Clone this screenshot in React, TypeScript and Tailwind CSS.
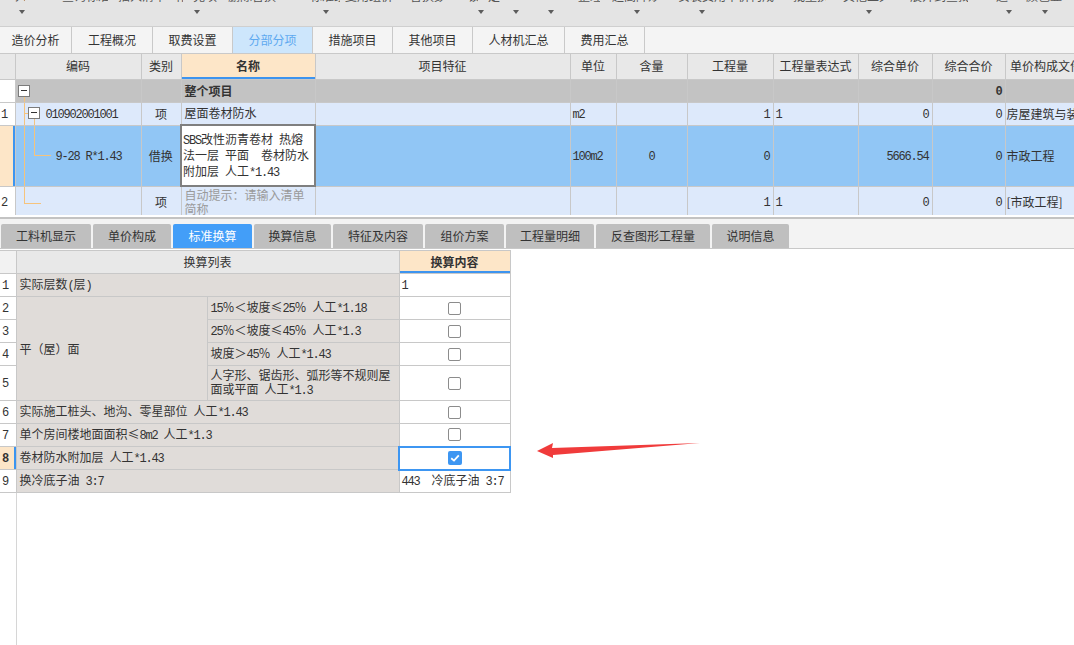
import React from "react";

const MONO = "font-['Liberation_Mono',monospace] text-[12px] tracking-[-1.2px]";

// splits a label into CJK runs and narrow ascii runs (the app draws ascii in a bitmap mono font)
function T({ s }: { s: string }) {
  const parts = s.split(/([\x20-\x7e]+)/);
  return (
    <>
      {parts.map((p, i) =>
        p === "" ? null : /^[\x20-\x7e]+$/.test(p) ? (
          <span key={i} className={MONO}>
            {p}
          </span>
        ) : (
          <React.Fragment key={i}>{p}</React.Fragment>
        )
      )}
    </>
  );
}

const toolFragments = [
  { c: "ml-[15px] w-[10px]", t: "入" },
  { c: "ml-[37px] w-[46px]", t: "查询标准" },
  { c: "ml-[10px] w-[47px]", t: "插入清单" },
  { c: "ml-[10px] w-[8px]", t: "补" },
  { c: "ml-[10px] w-[27px]", t: "充项" },
  { c: "ml-[8px] w-[59px]", t: "删除替换" },
  { c: "ml-[23px] w-[30px]", t: "标准组" },
  { c: "ml-[5px] w-[50px]", t: "复用组价" },
  { c: "ml-[15px] w-[33px]", t: "替换数" },
  { c: "ml-[25px] w-[10px]", t: "锁" },
  { c: "ml-[10px] w-[15px]", t: "定" },
  { c: "ml-[75px] w-[22px]", t: "整理" },
  { c: "ml-[12px] w-[45px]", t: "超高降效" },
  { c: "ml-[21px] w-[102px]", t: "安装费用单价构成" },
  { c: "ml-[13px] w-[33px]", t: "批量换" },
  { c: "ml-[17px] w-[43px]", t: "其他工具" },
  { c: "ml-[24px] w-[58px]", t: "展开到查找" },
  { c: "ml-[28px] w-[14px]", t: "过" },
  { c: "ml-[16px] w-[37px]", t: "颜色显" },
];

const carets = [
  "ml-[19px]",
  "ml-[169px]",
  "ml-[123px]",
  "ml-[149px]",
  "ml-[29px]",
  "ml-[29px]",
  "ml-[80px]",
  "ml-[59px]",
  "ml-[161px]",
  "ml-[134px]",
  "ml-[30px]",
];

const topTabs = [
  { t: "造价分析", c: "w-[72px]" },
  { t: "工程概况", c: "w-[81px]" },
  { t: "取费设置", c: "w-[80px]" },
  { t: "分部分项", c: "w-[80px]", a: true },
  { t: "措施项目", c: "w-[80px]" },
  { t: "其他项目", c: "w-[80px]" },
  { t: "人材机汇总", c: "w-[92px]" },
  { t: "费用汇总", c: "w-[80px]" },
];

const bottomTabs = [
  { t: "工料机显示", c: "w-[90px]" },
  { t: "单价构成", c: "w-[78px]" },
  { t: "标准换算", c: "w-[79px]", a: true },
  { t: "换算信息", c: "w-[77px]" },
  { t: "特征及内容", c: "w-[90px]" },
  { t: "组价方案", c: "w-[79px]" },
  { t: "工程量明细", c: "w-[88px]" },
  { t: "反查图形工程量", c: "w-[114px]" },
  { t: "说明信息", c: "w-[77px]" },
];

const bd = "border border-[#c8c8c8] p-0";
const LINE = "absolute bg-[#f6c37c]";

function MinusBox({ className }: { className: string }) {
  return (
    <span className={`absolute w-[12px] h-[12px] border border-[#7b7b7b] bg-white flex items-center justify-center ${className}`}>
      <span className="w-[6px] h-[1px] bg-[#333]" />
    </span>
  );
}

function Check({ on }: { on?: boolean }) {
  return on ? (
    <span className="inline-flex w-[14px] h-[14px] rounded-[2px] bg-[#3d96f2] items-center justify-center">
      <svg width="10" height="8" viewBox="0 0 10 8">
        <path d="M1.2 4.2 L4 6.6 L8.8 1.4" stroke="white" strokeWidth="1.8" fill="none" />
      </svg>
    </span>
  ) : (
    <span className="inline-block w-[13px] h-[13px] rounded-[2px] border border-[#8c8c8c] bg-white" />
  );
}

const rowNo = `${bd} border-l-0 bg-white text-left pl-[1px]`;
const num = "text-right pr-[3px]";

export default function App() {
  return (
    <div className="relative w-[1074px] h-[645px] overflow-hidden bg-white text-[12px] leading-[16px] text-[#333] font-['Microsoft_YaHei','Noto_Sans_CJK_SC',sans-serif]">
      {/* toolbar, scrolled so only its lower edge shows */}
      <div className="h-[27px] bg-[#e4e4e4] border-b border-[#cfcfcf]">
        <div className="h-[3px] overflow-hidden">
          <div className="flex -mt-[12px] text-[#555] whitespace-nowrap">
            {toolFragments.map((f, i) => (
              <span key={i} className={`inline-block overflow-hidden ${f.c}`}>
                {f.t}
              </span>
            ))}
          </div>
        </div>
        <div className="flex mt-[7px]">
          {carets.map((c, i) => (
            <span
              key={i}
              className={`w-0 h-0 border-l-[3px] border-r-[3px] border-t-[4px] border-l-transparent border-r-transparent border-t-[#5c5c5c] ${c}`}
            />
          ))}
        </div>
      </div>

      {/* page tabs */}
      <div className="flex h-[27px] bg-[#f4f4f4] border-b border-[#c9c9c9]">
        {topTabs.map((t) => (
          <div
            key={t.t}
            className={`${t.c} border-r border-[#c9c9c9] flex items-center justify-center ${
              t.a ? "bg-[#cde6fc] text-[#5ea9f0]" : ""
            }`}
          >
            {t.t}
          </div>
        ))}
      </div>

      {/* bill grid */}
      <div className="h-[161px] overflow-hidden">
        <table className="table-fixed border-collapse w-[1087px]">
          <colgroup>
            <col className="w-[15px]" />
            <col className="w-[126px]" />
            <col className="w-[40px]" />
            <col className="w-[134px]" />
            <col className="w-[255px]" />
            <col className="w-[46px]" />
            <col className="w-[71px]" />
            <col className="w-[86px]" />
            <col className="w-[85px]" />
            <col className="w-[74px]" />
            <col className="w-[73px]" />
            <col className="w-[82px]" />
          </colgroup>
          <thead>
            <tr className="h-[25px] bg-[#e8e8e8]">
              <th className={`${bd} border-t-0 border-l-0`} />
              <th className={`${bd} border-t-0 font-normal`}>编码</th>
              <th className={`${bd} border-t-0 font-normal`}>类别</th>
              <th className={`${bd} border-t-0 font-bold bg-[#fde6c8] shadow-[inset_0_-2px_0_#3d94ef]`}>名称</th>
              <th className={`${bd} border-t-0 font-normal`}>项目特征</th>
              <th className={`${bd} border-t-0 font-normal`}>单位</th>
              <th className={`${bd} border-t-0 font-normal`}>含量</th>
              <th className={`${bd} border-t-0 font-normal`}>工程量</th>
              <th className={`${bd} border-t-0 font-normal`}>工程量表达式</th>
              <th className={`${bd} border-t-0 font-normal`}>综合单价</th>
              <th className={`${bd} border-t-0 font-normal`}>综合合价</th>
              <th className={`${bd} border-t-0 font-normal whitespace-nowrap overflow-hidden`}>单价构成文件</th>
            </tr>
          </thead>
          <tbody>
            <tr className="h-[23px] bg-[#c3c3c3]">
              <td className={rowNo} />
              <td className={`${bd} relative`}>
                <MinusBox className="left-[2px] top-[5px]" />
                <span className={`${LINE} left-[8px] top-[17px] bottom-0 w-[1px]`} />
              </td>
              <td className={bd} />
              <td className={`${bd} pl-[3px] font-bold`}>整个项目</td>
              <td className={bd} />
              <td className={bd} />
              <td className={bd} />
              <td className={bd} />
              <td className={bd} />
              <td className={bd} />
              <td className={`${bd} ${num} font-bold`}>
                <span className={`${MONO} font-bold`}>0</span>
              </td>
              <td className={bd} />
            </tr>
            <tr className="h-[23px] bg-[#dde9fb]">
              <td className={rowNo}>
                <T s="1" />
              </td>
              <td className={`${bd} relative`}>
                <span className={`${LINE} left-[8px] top-0 bottom-0 w-[1px]`} />
                <span className={`${LINE} left-[8px] top-[10px] h-[1px] w-[4px]`} />
                <MinusBox className="left-[12px] top-[4px]" />
                <span className={`${LINE} left-[18px] top-[16px] bottom-0 w-[1px]`} />
                <span className="pl-[30px]">
                  <T s="010902001001" />
                </span>
              </td>
              <td className={`${bd} text-center`}>项</td>
              <td className={`${bd} pl-[3px]`}>屋面卷材防水</td>
              <td className={bd} />
              <td className={`${bd} pl-[2px]`}>
                <T s="m2" />
              </td>
              <td className={bd} />
              <td className={`${bd} ${num}`}>
                <T s="1" />
              </td>
              <td className={`${bd} pl-[2px]`}>
                <T s="1" />
              </td>
              <td className={`${bd} ${num}`}>
                <T s="0" />
              </td>
              <td className={`${bd} ${num}`}>
                <T s="0" />
              </td>
              <td className={`${bd} pl-[1px] whitespace-nowrap overflow-hidden`}>房屋建筑与装饰工程</td>
            </tr>
            <tr className="h-[61px] bg-[#91c6f5]">
              <td className={`${bd} border-l-0 bg-[#fde6c8] shadow-[inset_-2px_0_0_#3c95f0]`} />
              <td className={`${bd} relative`}>
                <span className={`${LINE} left-[8px] top-0 bottom-0 w-[1px]`} />
                <span className={`${LINE} left-[18px] top-0 h-[29px] w-[1px]`} />
                <span className={`${LINE} left-[18px] top-[29px] h-[1px] w-[17px]`} />
                <span className="pl-[40px]">
                  <T s="9-28 R*1.43" />
                </span>
              </td>
              <td className={`${bd} text-center`}>借换</td>
              <td className="border-2 border-[#7f7f7f] bg-white p-0 pl-[1px] leading-[14px]">
                <T s="SBS改性沥青卷材 热熔" />
                <br />
                <T s="法一层 平面　卷材防水" />
                <br />
                <T s="附加层 人工*1.43" />
              </td>
              <td className={bd} />
              <td className={`${bd} pl-[2px]`}>
                <T s="100m2" />
              </td>
              <td className={`${bd} text-center`}>
                <T s="0" />
              </td>
              <td className={`${bd} ${num}`}>
                <T s="0" />
              </td>
              <td className={bd} />
              <td className={`${bd} ${num}`}>
                <T s="5666.54" />
              </td>
              <td className={`${bd} ${num}`}>
                <T s="0" />
              </td>
              <td className={`${bd} pl-[1px]`}>市政工程</td>
            </tr>
            <tr className="h-[32px] bg-[#dde9fb]">
              <td className={rowNo}>
                <T s="2" />
              </td>
              <td className={`${bd} relative`}>
                <span className={`${LINE} left-[8px] top-0 h-[16px] w-[1px]`} />
                <span className={`${LINE} left-[8px] top-[16px] h-[1px] w-[17px]`} />
              </td>
              <td className={`${bd} text-center`}>项</td>
              <td className={`${bd} px-[3px] text-[#9a9a9a] leading-[14px]`}>自动提示：请输入清单简称</td>
              <td className={bd} />
              <td className={bd} />
              <td className={bd} />
              <td className={`${bd} ${num}`}>
                <T s="1" />
              </td>
              <td className={`${bd} pl-[2px]`}>
                <T s="1" />
              </td>
              <td className={`${bd} ${num}`}>
                <T s="0" />
              </td>
              <td className={`${bd} ${num}`}>
                <T s="0" />
              </td>
              <td className={`${bd} pl-[1px]`}>[市政工程]</td>
            </tr>
          </tbody>
        </table>
      </div>

      <div className="h-[2px]" />
      <div className="h-[2px] bg-[#c3c3c3]" />

      {/* detail tabs */}
      <div className="h-[30px] bg-[#f3f3f3] border-b border-[#c8c8c8] flex items-end gap-[2px] pl-[1px]">
        {bottomTabs.map((t) => (
          <div
            key={t.t}
            className={`${t.c} h-[24px] rounded-t-[2px] flex items-center justify-center ${
              t.a ? "bg-[#439ef8] text-white" : "bg-[#bfbfbf] text-[#333]"
            }`}
          >
            {t.t}
          </div>
        ))}
      </div>

      {/* standard conversion grid */}
      <table className="mt-[1px] table-fixed border-collapse w-[510px]">
        <colgroup>
          <col className="w-[16px]" />
          <col className="w-[191px]" />
          <col className="w-[192px]" />
          <col className="w-[111px]" />
        </colgroup>
        <thead>
          <tr className="h-[23px]">
            <th className={`${bd} border-l-0 bg-[#f2f2f2]`} />
            <th colSpan={2} className={`${bd} bg-[#e8e8e8] font-normal`}>
              换算列表
            </th>
            <th className={`${bd} bg-[#fde6c8] font-bold shadow-[inset_0_-2px_0_#3d94ef]`}>换算内容</th>
          </tr>
        </thead>
        <tbody className="bg-[#e0dcd9]">
          <tr className="h-[23px]">
            <td className={`${rowNo} pl-[2px]`}>
              <T s="1" />
            </td>
            <td colSpan={2} className={`${bd} pl-[3px]`}>
              <T s="实际层数(层)" />
            </td>
            <td className={`${bd} bg-white pl-[2px]`}>
              <T s="1" />
            </td>
          </tr>
          <tr className="h-[23px]">
            <td className={`${rowNo} pl-[2px]`}>
              <T s="2" />
            </td>
            <td rowSpan={4} className={`${bd} pl-[3px]`}>
              平（屋）面
            </td>
            <td className={`${bd} pl-[3px] whitespace-nowrap`}>
              <T s="15％＜坡度≤25％ 人工*1.18" />
            </td>
            <td className={`${bd} bg-white`}>
              <div className="flex justify-center">
                <Check />
              </div>
            </td>
          </tr>
          <tr className="h-[23px]">
            <td className={`${rowNo} pl-[2px]`}>
              <T s="3" />
            </td>
            <td className={`${bd} pl-[3px] whitespace-nowrap`}>
              <T s="25％＜坡度≤45％ 人工*1.3" />
            </td>
            <td className={`${bd} bg-white`}>
              <div className="flex justify-center">
                <Check />
              </div>
            </td>
          </tr>
          <tr className="h-[23px]">
            <td className={`${rowNo} pl-[2px]`}>
              <T s="4" />
            </td>
            <td className={`${bd} pl-[3px]`}>
              <T s="坡度＞45％ 人工*1.43" />
            </td>
            <td className={`${bd} bg-white`}>
              <div className="flex justify-center">
                <Check />
              </div>
            </td>
          </tr>
          <tr className="h-[35px]">
            <td className={`${rowNo} pl-[2px]`}>
              <T s="5" />
            </td>
            <td className={`${bd} pl-[3px] leading-[14px]`}>
              <div>人字形、锯齿形、弧形等不规则屋</div>
              <div>
                <T s="面或平面 人工*1.3" />
              </div>
            </td>
            <td className={`${bd} bg-white`}>
              <div className="flex justify-center">
                <Check />
              </div>
            </td>
          </tr>
          <tr className="h-[23px]">
            <td className={`${rowNo} pl-[2px]`}>
              <T s="6" />
            </td>
            <td colSpan={2} className={`${bd} pl-[3px]`}>
              <T s="实际施工桩头、地沟、零星部位 人工*1.43" />
            </td>
            <td className={`${bd} bg-white`}>
              <div className="flex justify-center">
                <Check />
              </div>
            </td>
          </tr>
          <tr className="h-[23px]">
            <td className={`${rowNo} pl-[2px]`}>
              <T s="7" />
            </td>
            <td colSpan={2} className={`${bd} pl-[3px]`}>
              <T s="单个房间楼地面面积≤8m2 人工*1.3" />
            </td>
            <td className={`${bd} bg-white`}>
              <div className="flex justify-center">
                <Check />
              </div>
            </td>
          </tr>
          <tr className="h-[23px]">
            <td className={`${bd} border-l-0 bg-[#fde6c8] pl-[2px] font-bold shadow-[inset_-2px_0_0_#3c95f0]`}>
              <span className={`${MONO} font-bold`}>8</span>
            </td>
            <td colSpan={2} className={`${bd} pl-[3px]`}>
              <T s="卷材防水附加层 人工*1.43" />
            </td>
            <td className="border-2 border-[#3d96f2] bg-white p-0">
              <div className="flex justify-center">
                <Check on />
              </div>
            </td>
          </tr>
          <tr className="h-[23px]">
            <td className={`${rowNo} pl-[2px]`}>
              <T s="9" />
            </td>
            <td colSpan={2} className={`${bd} pl-[3px]`}>
              <T s="换冷底子油 3:7" />
            </td>
            <td className={`${bd} bg-white pl-[2px] whitespace-nowrap`}>
              <T s="443" />
              {"\u3000"}
              <T s="冷底子油 3:7" />
            </td>
          </tr>
        </tbody>
      </table>
      <div className="ml-[16px] h-[160px] border-l border-[#d6d6d6]" />

      {/* red annotation arrow */}
      <svg className="absolute left-[530px] top-[436px]" width="180" height="28" viewBox="530 436 180 28">
        <polygon points="537,451 553,443 552,448 700,443 553,455 553,458" fill="#f03b3b" />
      </svg>
    </div>
  );
}
